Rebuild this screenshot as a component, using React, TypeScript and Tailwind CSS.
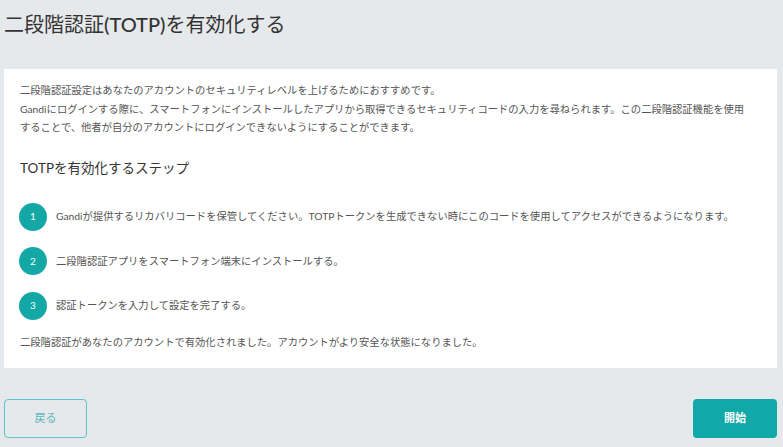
const steps = [
  "Gandiが提供するリカバリコードを保管してください。TOTPトークンを生成できない時にこのコードを使用してアクセスができるようになります。",
  "二段階認証アプリをスマートフォン端末にインストールする。",
  "認証トークンを入力して設定を完了する。",
];

export default function App() {
  return (
    <div
      className="min-h-[447px] w-[783px] bg-[#e6e9ec] pl-[4px] pr-[6px] pt-[10px] pb-[10px]"
      style={{ fontFamily: '"Lato", "Noto Sans CJK JP", sans-serif' }}
    >
      <h1 className="text-[20px] leading-[28px] text-[#333]">
        二段階認証<span className="font-medium">(TOTP)</span>を有効化する
      </h1>

      <div className="mt-[31px] bg-white pl-4 pr-6 pt-[12px] pb-[17px] text-[10.3px] leading-[18.5px] text-[#555]">
        <p>
          二段階認証設定はあなたのアカウントのセキュリティレベルを上げるためにおすすめです。
          <br />
          Gandiにログインする際に、スマートフォンにインストールしたアプリから取得できるセキュリティコードの入力を尋ねられます。この二段階認証機能を使用することで、他者が自分のアカウントにログインできないようにすることができます。
        </p>

        <h2 className="mt-[21px] text-[13.5px] leading-[20px] text-[#333]">
          TOTPを有効化するステップ
        </h2>

        <ol className="mt-[25px] flex flex-col gap-[16.5px]">
          {steps.map((s, i) => (
            <li key={i} className="flex items-center gap-[9px]">
              <span className="-ml-px flex h-[28px] w-[28px] shrink-0 items-center justify-center rounded-full bg-[#13a8a6] text-[10px] text-white">
                {i + 1}
              </span>
              <span>{s}</span>
            </li>
          ))}
        </ol>

        <p className="mt-[13px]">
          二段階認証があなたのアカウントで有効化されました。アカウントがより安全な状態になりました。
        </p>
      </div>

      <div className="mt-[31px] flex items-center justify-between">
        <button className="h-[39px] w-[83px] rounded-[4px] border border-[#5cc6c9] text-[11px] text-[#5bb8bb]">
          戻る
        </button>
        <button className="h-[39px] w-[84px] rounded-[4px] bg-[#10a8a8] text-[11px] font-bold text-white">
          開始
        </button>
      </div>
    </div>
  );
}
